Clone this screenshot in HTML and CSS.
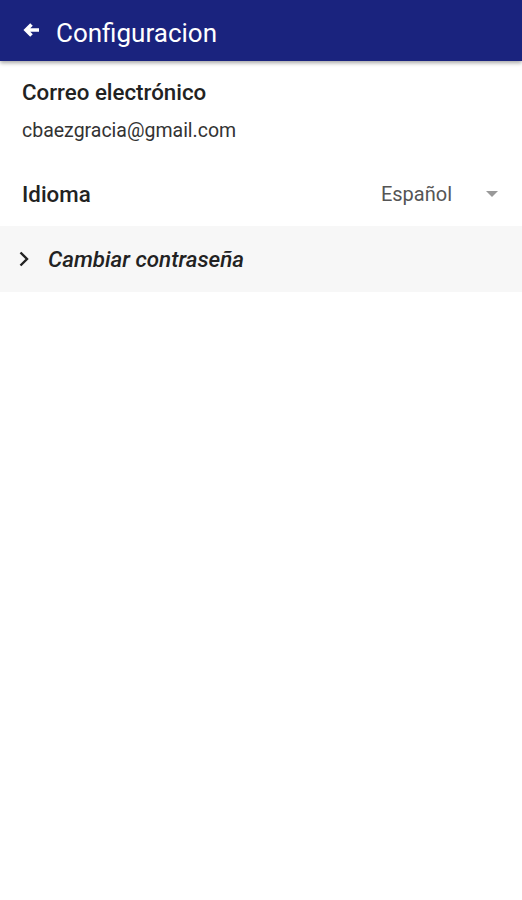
FILE: index.html
```html
<!DOCTYPE html>
<html lang="es">
  <head>
    <meta charset="UTF-8" />
    <meta name="viewport" content="width=device-width, initial-scale=1.0" />
    <title>Configuracion</title>
    <link rel="stylesheet" href="styles.css">
  </head>
  <body>
    <header class="toolbar">
      <button class="back-btn" aria-label="Volver">
        <svg width="20" height="18" viewBox="0 0 20 18">
          <path d="M18 9H5 M10.5 3.5L5 9l5.5 5.5" fill="none" stroke="#fff" stroke-width="3.6" />
        </svg>
      </button>
      <h1>Configuracion</h1>
    </header>

    <main>
      <section class="field">
        <h2>Correo electrónico</h2>
        <p class="email">cbaezgracia@gmail.com</p>
      </section>

      <section class="field lang-row">
        <h2>Idioma</h2>
        <div class="select">
          <span>Español</span>
          <span class="caret"></span>
        </div>
      </section>

      <section class="expander">
        <svg class="chevron" width="12" height="18" viewBox="0 0 12 18">
          <path d="M2.5 2.5l6.5 6.5-6.5 6.5" fill="none" stroke="#222" stroke-width="2.4" />
        </svg>
        <span>Cambiar contraseña</span>
      </section>
    </main>
  </body>
</html>
```

FILE: styles.css
```css
* {
  margin: 0;
  padding: 0;
  box-sizing: border-box;
}

body {
  font-family: Roboto, "Noto Sans", sans-serif;
  color: #222;
  background: #fff;
}

.toolbar {
  height: 61px;
  background: #1a237e;
  color: #fff;
  display: flex;
  align-items: center;
  padding: 0 0 0 21px;
  box-shadow: 0 2px 4px rgba(0, 0, 0, 0.35);
  position: relative;
  z-index: 1;
}

.back-btn {
  background: none;
  border: none;
  width: 20px;
  height: 18px;
  display: flex;
  margin-top: -1px;
}

.toolbar h1 {
  font-size: 26px;
  font-weight: 400;
  margin-left: 15px;
  margin-top: 4px;
}

.field {
  padding: 0 22px;
}

.field h2 {
  font-size: 22.3px;
  font-weight: 500;
  color: #222;
}

.field:first-child {
  padding-top: 18px;
}

.email {
  margin-top: 14px;
  font-size: 19.5px;
  color: #333;
}

.lang-row {
  display: flex;
  align-items: center;
  justify-content: space-between;
  height: 64px;
  margin-top: 20px;
  padding-right: 24px;
}

.select {
  display: flex;
  align-items: center;
  gap: 34px;
  font-size: 20px;
  color: #555;
}

.caret {
  width: 0;
  height: 0;
  border-left: 6.5px solid transparent;
  border-right: 6.5px solid transparent;
  border-top: 6.5px solid #999;
}

.expander {
  background: #f7f7f7;
  height: 66px;
  display: flex;
  align-items: center;
  padding-left: 18px;
  gap: 18px;
  font-size: 22.4px;
  font-weight: 500;
  font-style: italic;
  color: #222;
}
```
